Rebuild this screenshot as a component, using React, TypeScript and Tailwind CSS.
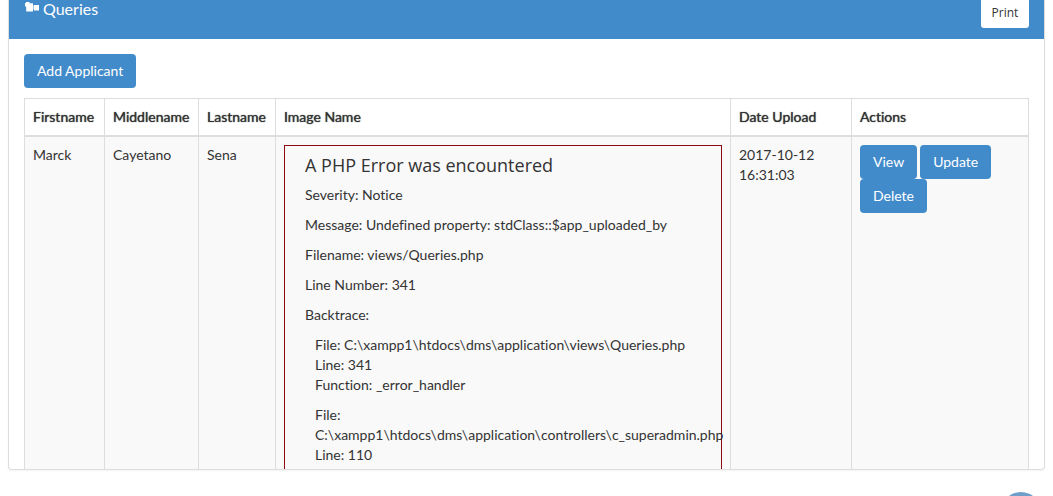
const columns = [
  { label: 'Firstname', width: 'w-[80px]' },
  { label: 'Middlename', width: 'w-[94px]' },
  { label: 'Lastname', width: 'w-[77px]' },
  { label: 'Image Name', width: '' },
  { label: 'Date Upload', width: 'w-[121px]' },
  { label: 'Actions', width: 'w-[177px]' },
];

const notices = [
  'Severity: Notice',
  'Message: Undefined property: stdClass::$app_uploaded_by',
  'Filename: views/Queries.php',
  'Line Number: 341',
  'Backtrace:',
];

const frames = [
  { file: 'C:\\xampp1\\htdocs\\dms\\application\\views\\Queries.php', line: 341, fn: '_error_handler' },
  { file: 'C:\\xampp1\\htdocs\\dms\\application\\controllers\\c_superadmin.php', line: 110 },
];

function Button({ children }: { children: string }) {
  return (
    <button type="button" className="h-[34px] rounded bg-[#428bca] px-[13px] text-white">
      {children}
    </button>
  );
}

function PhpError() {
  return (
    <section className="border border-[#8a0a10] pb-8 pl-5">
      <h4 className="mt-[7px] mb-2 font-['Open_Sans',sans-serif] text-lg leading-6">A PHP Error was encountered</h4>
      {notices.map((text) => (
        <p key={text} className="mb-[10px]">{text}</p>
      ))}
      {frames.map((frame) => (
        <p key={frame.file} className="mb-[10px] ml-[10px]">
          File: {frame.file}
          <br />
          Line: {frame.line}
          {frame.fn && (
            <>
              <br />
              Function: {frame.fn}
            </>
          )}
        </p>
      ))}
    </section>
  );
}

export default function App() {
  return (
    <div className="relative flex h-screen flex-col overflow-hidden bg-white px-2 pb-[26px] font-['Lato',sans-serif] text-sm leading-5 text-[#333333] [font-variant-ligatures:none]">
      <main className="flex min-h-0 flex-1 flex-col overflow-hidden rounded-b border border-t-0 border-[#dddddd] shadow-xs">
        <header className="flex h-[39px] shrink-0 items-start justify-between bg-[#428bca] px-[15px] text-white">
          <h3 className="flex items-start gap-1 text-base leading-[18px]">
            <svg width="15" height="13" viewBox="0 0 15 13" fill="currentColor" aria-hidden="true">
              <path d="M1 3H2V2H5.5V3.2H9V11.5H2.2V6.6H1Z" />
              <path d="M9 5.6H10V9.5H9Z" opacity="0.55" />
              <path d="M10 5H15V10.5H10Z" />
            </svg>
            Queries
          </h3>
          <button type="button" className="h-7 w-12 rounded-b-[3px] bg-white pb-[2px] font-['Open_Sans',sans-serif] text-xs text-[#333333]">
            Print
          </button>
        </header>
        <div className="min-h-0 flex-1 overflow-hidden p-[15px]">
          <Button>Add Applicant</Button>
          <table className="mt-[10px] w-full table-fixed border-collapse border border-[#dddddd]">
            <thead>
              <tr>
                {columns.map(({ label, width }) => (
                  <th key={label} scope="col" className={`${width} border border-b-2 border-[#dddddd] p-2 text-left font-normal text-shadow-[0_0_1px_#333333]`}>
                    {label}
                  </th>
                ))}
              </tr>
            </thead>
            <tbody>
              <tr className="bg-[#f9f9f9] align-top">
                <td className="border border-[#dddddd] p-2">Marck</td>
                <td className="border border-[#dddddd] p-2">Cayetano</td>
                <td className="border border-[#dddddd] p-2">Sena</td>
                <td className="border border-[#dddddd] p-2"><PhpError /></td>
                <td className="border border-[#dddddd] p-2">2017-10-12 16:31:03</td>
                <td className="border border-[#dddddd] p-2">
                  <div className="flex flex-wrap gap-x-[3px]">
                    <Button>View</Button>
                    <Button>Update</Button>
                    <Button>Delete</Button>
                  </div>
                </td>
              </tr>
            </tbody>
          </table>
        </div>
      </main>
      <a href="#root" aria-label="Back to top" className="absolute right-3 -bottom-9 size-10 rounded-full bg-[#6f9ecb]" />
    </div>
  );
}
